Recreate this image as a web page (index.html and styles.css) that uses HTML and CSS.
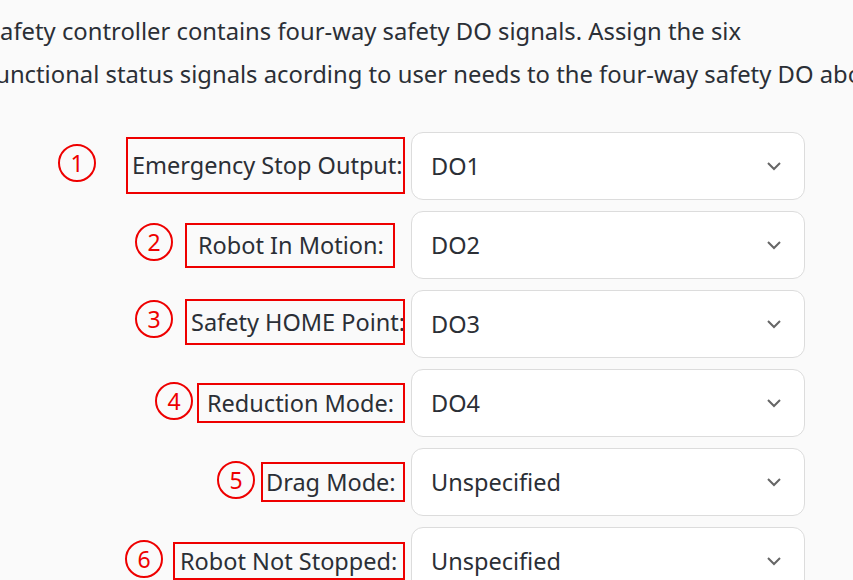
FILE: index.html
```html
<!DOCTYPE html>
<html lang="en">
<head>
  <meta charset="UTF-8" />
  <title>Safety DO</title>
  <link rel="stylesheet" href="styles.css">
</head>
<body>
  <p class="intro">
    Safety controller contains four-way safety DO signals. Assign the six<br />
    functional status signals acording to user needs to the four-way safety DO above.
  </p>

  <div class="do-form">
    <div class="row row-1">
      <div class="label-area">
        <span class="num">1</span>
        <span class="tag">Emergency Stop Output:</span>
      </div>
      <div class="select"><span>DO1</span><svg class="chev" viewBox="0 0 16 10"><path d="M2 2l6 6 6-6"/></svg></div>
    </div>
    <div class="row row-2">
      <div class="label-area">
        <span class="num">2</span>
        <span class="tag">Robot In Motion:</span>
      </div>
      <div class="select"><span>DO2</span><svg class="chev" viewBox="0 0 16 10"><path d="M2 2l6 6 6-6"/></svg></div>
    </div>
    <div class="row row-3">
      <div class="label-area">
        <span class="num">3</span>
        <span class="tag">Safety HOME Point:</span>
      </div>
      <div class="select"><span>DO3</span><svg class="chev" viewBox="0 0 16 10"><path d="M2 2l6 6 6-6"/></svg></div>
    </div>
    <div class="row row-4">
      <div class="label-area">
        <span class="num">4</span>
        <span class="tag">Reduction Mode:</span>
      </div>
      <div class="select"><span>DO4</span><svg class="chev" viewBox="0 0 16 10"><path d="M2 2l6 6 6-6"/></svg></div>
    </div>
    <div class="row row-5">
      <div class="label-area">
        <span class="num">5</span>
        <span class="tag">Drag Mode:</span>
      </div>
      <div class="select"><span>Unspecified</span><svg class="chev" viewBox="0 0 16 10"><path d="M2 2l6 6 6-6"/></svg></div>
    </div>
    <div class="row row-6">
      <div class="label-area">
        <span class="num">6</span>
        <span class="tag">Robot Not Stopped:</span>
      </div>
      <div class="select"><span>Unspecified</span><svg class="chev" viewBox="0 0 16 10"><path d="M2 2l6 6 6-6"/></svg></div>
    </div>
  </div>
</body>
</html>
```

FILE: styles.css
```css
/* BASE */
* { box-sizing: border-box; margin: 0; padding: 0; }
body {
  font-family: "Noto Sans", "Open Sans", sans-serif;
  background: #fafafa;
  color: #2b2f36;
  overflow: hidden;
  height: 580px;
}

.intro {
  margin: 10px 0 0 -13px;
  font-size: 23.8px;
  line-height: 43px;
  white-space: nowrap;
}

/* FORM ROWS */
.do-form {
  margin-top: 36px;
  display: flex;
  flex-direction: column;
  gap: 11px;
}
.row {
  display: grid;
  grid-template-columns: 405px 394px;
  column-gap: 6px;
  align-items: center;
  height: 68px;
}
.label-area {
  display: flex;
  justify-content: flex-end;
  align-items: center;
  gap: 10px;
}
.num {
  width: 38px;
  height: 38px;
  border: 2px solid #ee0000;
  border-radius: 50%;
  color: #ee0000;
  font-size: 23px;
  display: flex;
  align-items: center;
  justify-content: center;
  line-height: 1;
  position: relative;
  top: -3px;
}
.tag {
  border: 2px solid #ee0000;
  font-size: 23.5px;
  padding: 0 0 0 4px;
  white-space: nowrap;
  overflow: hidden;
  display: flex;
  align-items: center;
}

.row-1 .label-area { gap: 30px; }
.row-1 .tag { width: 279px; height: 57px; position: relative; top: -1px; }
.row-2 .label-area { gap: 12px; }
.row-2 .tag { width: 210px; height: 45px; margin-right: 10px; padding-left: 11px; }
.row-3 .label-area { gap: 12px; }
.row-3 .tag { width: 220px; height: 46px; padding-left: 4px; position: relative; top: -2px; }
.row-3 .num { top: -5px; }
.row-4 .label-area { gap: 4px; }
.row-4 .tag { width: 208px; height: 40px; padding-left: 8px; }
.row-4 .num { top: -2px; }
.row-5 .label-area { gap: 6px; }
.row-5 .tag { width: 144px; height: 40px; padding-left: 3px; }
.row-5 .num { top: -2px; }
.row-6 .label-area { gap: 10px; }
.row-6 .tag { width: 232px; height: 38px; padding-left: 5px; }
.row-6 .num { top: -2px; }

/* SELECT */
.select {
  height: 68px;
  background: #fff;
  border: 1px solid #dcdcdc;
  border-radius: 12px;
  display: flex;
  align-items: center;
  justify-content: space-between;
  padding: 0 22px 0 19px;
  font-size: 23.5px;
}
.chev {
  width: 16px;
  height: 10px;
  fill: none;
  stroke: #666;
  stroke-width: 2;
}
```
